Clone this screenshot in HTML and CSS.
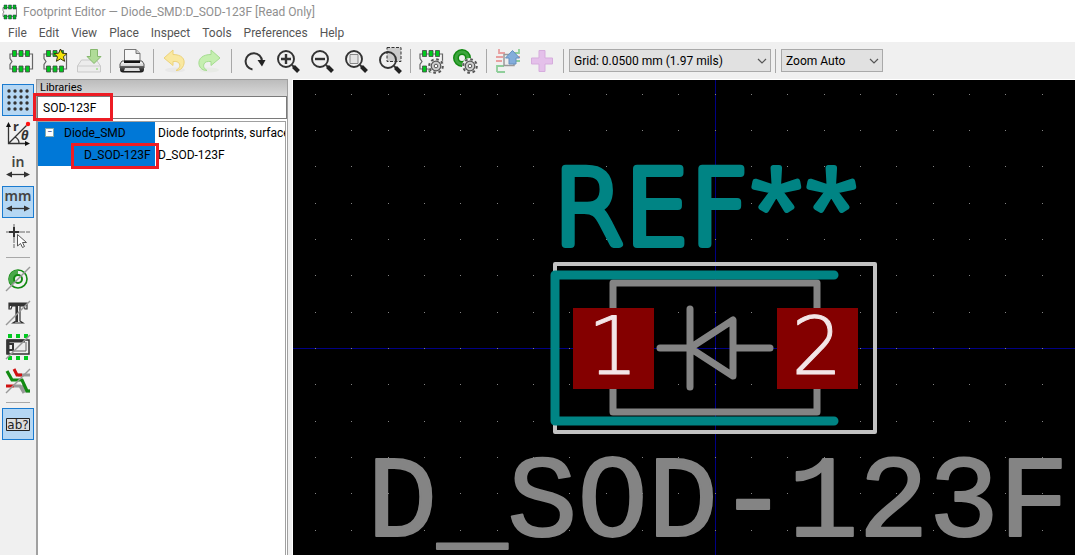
FILE: index.html
```
<!DOCTYPE html>
<html lang="en">
<head>
<meta charset="utf-8">
<title>Footprint Editor — Diode_SMD:D_SOD-123F [Read Only]</title>
<link rel="stylesheet" href="styles.css">
</head>
<body>
<svg class="defs" width="0" height="0" aria-hidden="true">
  <defs>
    <linearGradient id="tray" x1="0" y1="0" x2="0" y2="1"><stop offset="0" stop-color="#fff"/><stop offset="1" stop-color="#bbb"/></linearGradient>
    <linearGradient id="dark" x1="0" y1="0" x2="0" y2="1"><stop offset="0" stop-color="#666"/><stop offset="1" stop-color="#111"/></linearGradient>
    <pattern id="grid" x="315" y="130" width="109" height="109" patternUnits="userSpaceOnUse">
      <path fill="#848484" d="M0 0h1v1h-1zM36 0h1v1h-1zM73 0h1v1h-1zM0 36h1v1h-1zM36 36h1v1h-1zM73 36h1v1h-1zM0 73h1v1h-1zM36 73h1v1h-1zM73 73h1v1h-1z"/>
    </pattern>
    <g id="chip">
      <path d="M1 5h22.500v15h-22.500v-4.500l2-3-2-3z" fill="#f2f2f2" stroke="#666" stroke-width="1.200"/>
      <path d="M3.500 1.500h4v6h-4zM10 1.500h4v6h-4zM16.500 1.500h4v6h-4zM3.500 17h4v6h-4zM10 17h4v6h-4zM16.500 17h4v6h-4z" fill="#00c81e" stroke="#444" stroke-width=".8"/>
    </g>
    <g id="gear">
      <circle cx="17" cy="17" r="6.800" fill="none" stroke="#555" stroke-width="2" stroke-dasharray="2.670 2.670"/>
      <circle cx="17" cy="17" r="4.800" fill="#ccc" stroke="#555" stroke-width="1.200"/>
      <circle cx="17" cy="17" r="1.800" fill="#fff" stroke="#555"/>
    </g>
    <g id="lens"><circle cx="10" cy="10" r="8" fill="none" stroke="#333" stroke-width="1.900"/><path d="M16 16l2 2" stroke="#333" stroke-width="2"/><path d="M17.500 17.500l5 5" stroke="#222" stroke-width="4"/></g>
    <g id="arrows"><path d="M2 18.500h20" stroke="#333" stroke-width="1.300"/><path d="M0 18.500l6-3v6zM24 18.500l-6-3v6z" fill="#333"/></g>
  </defs>
</svg>
<div class="app">
  <header class="titlebar">
    <svg class="logo" viewBox="0 0 16 16"><path d="M1 3.500h13.500v9h-13.500v-3l1-1.500-1-1.500z" fill="#f4f4f4" stroke="#555" stroke-width=".7"/><path d="M2 1h3v4h-3zM6.500 1h3v4h-3zM11 1h3v4h-3zM2 11h3v4h-3zM6.500 11h3v4h-3zM11 11h3v4h-3z" fill="#00b81e" stroke="#234" stroke-width=".5"/></svg>
    <span>Footprint Editor — Diode_SMD:D_SOD-123F [Read Only]</span>
  </header>
  <nav class="menubar">
    <button>File</button><button>Edit</button><button>View</button><button>Place</button><button>Inspect</button><button>Tools</button><button>Preferences</button><button>Help</button>
  </nav>
  <div class="toolbar">
    <button aria-label="Open footprint"><svg viewBox="0 0 24 24"><use href="#chip"/></svg></button>
    <button aria-label="New footprint"><svg viewBox="0 0 24 24"><use href="#chip"/><path d="M17.500 0l1.900 4.200 4.600.4-3.500 3.100 1.100 4.600-4.100-2.400-4.100 2.400 1.100-4.600-3.500-3.100 4.600-.4z" fill="#f4e208" stroke="#3b3510"/></svg></button>
    <button aria-label="Save" disabled><svg viewBox="0 0 24 24"><path d="M4.500 11h15l4 6v6h-23v-6z" fill="#ececec" stroke="#c9c9c9"/><path d="M.5 17h23" stroke="#ccc"/><circle cx="20" cy="20" r="1" fill="#9fe08a"/><path d="M13.500.5h7v7h3.500l-7 7-7-7h3.500z" fill="#b0dc98" stroke="#86b86e"/></svg></button>
    <i class="sep"></i>
    <button aria-label="Print"><svg viewBox="0 0 24 24"><path d="M4.500 13v-12.500h11.500l4 4v8.500z" fill="#f8f8f8" stroke="#777"/><path d="M16 .5v4h4" fill="#ccc" stroke="#777"/><path d="M2 12h20l2 3v4h-24v-4z" fill="url(#tray)" stroke="#555"/><path d="M4 11.500h16v2.500h-16z" fill="#111"/><path d="M0 17h24v3.500q0 3-3 3h-18q-3 0-3-3z" fill="url(#dark)"/><path d="M5 19h14l1 3h-16z" fill="#ddd"/></svg></button>
    <i class="sep"></i>
    <button aria-label="Undo" disabled><svg viewBox="0 0 24 24"><ellipse cx="12" cy="21" rx="10" ry="2.500" fill="#e8e8e8"/><path d="M1 9l9-8v4.500c8 0 13 4 10.500 11-1.500 3.500-4 5-7.500 5 3-2 4.500-4 3.500-6.500-1-2.500-3.500-2.700-6.500-2.500v4z" fill="#f9e8a0" stroke="#ecd27a"/></svg></button>
    <button aria-label="Redo" disabled><svg viewBox="0 0 24 24"><ellipse cx="12" cy="21" rx="10" ry="2.500" fill="#e8ebe6"/><path d="M23 9l-9-8v4.500c-8 0-13 4-12 10 1 4 4 6 8 6-3-2-4-4-3-6.500 1-2.500 3.500-2.700 7-2.500v4z" fill="#c5efb0" stroke="#a5dc90"/></svg></button>
    <i class="sep sep-wide"></i>
    <button aria-label="Refresh"><svg viewBox="0 0 24 24"><path d="M10.500 20.500a8.200 8.200 0 1 1 9.500-8.500" fill="none" stroke="#333" stroke-width="2"/><path d="M15.500 11h8l-3.500 6.500z" fill="#222"/></svg></button>
    <button aria-label="Zoom in"><svg viewBox="0 0 24 24"><use href="#lens"/><path d="M5 10h10M10 5v10" stroke="#333" stroke-width="2.400"/></svg></button>
    <button aria-label="Zoom out"><svg viewBox="0 0 24 24"><use href="#lens"/><path d="M5 10h10" stroke="#333" stroke-width="2.400"/></svg></button>
    <button aria-label="Zoom to fit"><svg viewBox="0 0 24 24"><use href="#lens"/><path d="M6 5.500h8v9h-8z" fill="#e4e4e4" stroke="#888"/></svg></button>
    <button aria-label="Zoom to selection"><svg viewBox="0 0 24 24"><path d="M9 -1.500h14v14h-14z" fill="#ccc" stroke="#333" stroke-dasharray="3 1.500"/><use href="#lens" y="1"/></svg></button>
    <i class="sep sep-tight"></i>
    <button aria-label="Footprint properties"><svg viewBox="0 0 24 24"><use href="#chip"/><circle cx="17" cy="17" r="8" fill="#efefef"/><use href="#gear"/></svg></button>
    <button aria-label="Pad settings"><svg viewBox="0 0 24 24"><circle cx="9" cy="9" r="6" fill="none" stroke="#128a12" stroke-width="6"/><circle cx="9" cy="9" r="6" fill="none" stroke="#3ca53c" stroke-width="3"/><circle cx="17" cy="17" r="8" fill="#efefef"/><use href="#gear"/></svg></button>
    <i class="sep"></i>
    <button aria-label="Insert in board" disabled><svg viewBox="0 0 24 24"><path d="M3 0v4h6M0 8h7M0 12h6M24 8h-5" fill="none" stroke="#e8a0a0" stroke-width="1.800"/><path d="M1 23v-6h7M1 23h8M18 4h5v-4M24 12h-5" fill="none" stroke="#8fce9a" stroke-width="1.800"/><path d="M8 5.500h10v11h-10z" fill="#eee" stroke="#999" stroke-width="1.500"/><path d="M16.500 1.500l7 7.500h-3.500v6h-7v-6h-3.500z" fill="#83addb" stroke="#6690c0"/></svg></button>
    <button aria-label="Add footprint" disabled><svg viewBox="0 0 24 24"><path d="M9 1.500h6v7.500h7.500v6h-7.500v7.500h-6v-7.500h-7.500v-6h7.500z" fill="#e4c0ea" stroke="#d6addd"/></svg></button>
    <i class="sep"></i>
    <div class="combo combo-grid"><select aria-label="Grid"><option>Grid: 0.0500 mm (1.97 mils)</option></select><svg viewBox="0 0 10 6"><path d="M1 1l4 4 4-4" fill="none" stroke="#555" stroke-width="1.200"/></svg></div>
    <i class="sep"></i>
    <div class="combo combo-zoom"><select aria-label="Zoom"><option>Zoom Auto</option></select><svg viewBox="0 0 10 6"><path d="M1 1l4 4 4-4" fill="none" stroke="#555" stroke-width="1.200"/></svg></div>
  </div>
  <main class="work">
    <div class="tools">
      <button class="on" aria-label="Show grid"><svg viewBox="0 0 24 24"><path d="M3 3h18.100M3 9h18.100M3 15h18.100M3 21h18.100" stroke="#333" stroke-width="3.400" stroke-linecap="round" stroke-dasharray="0.010 6"/></svg></button>
      <button aria-label="Polar coordinates"><svg viewBox="0 0 24 24"><path d="M2.500 3v18.500h18.500M2.500 21.500l18-18M9 15q4 2 4 6" fill="none" stroke="#333" stroke-width="1.300"/><path d="M2.500 0l2.500 5h-5zM24 21.500l-5-2.500v5z" fill="#111"/><circle cx="22" cy="2" r="2.200" fill="#f11"/><text x="7" y="9" class="glyph">r</text><text x="15" y="18" class="glyph glyph-it">θ</text></svg></button>
      <button aria-label="Units in inches"><svg viewBox="0 0 24 24"><text x="12" y="11" text-anchor="middle" class="unit">in</text><use href="#arrows"/></svg></button>
      <button class="on" aria-label="Units in millimeters"><svg viewBox="0 0 24 24"><text x="12" y="11" text-anchor="middle" class="unit">mm</text><use href="#arrows"/></svg></button>
      <button aria-label="Cursor shape"><svg viewBox="0 0 24 24"><path d="M0 8h24M8 0v24" stroke="#aaa" stroke-width="2" stroke-dasharray="4 1 14 1 4"/><path d="M3 8h10M8 3v10" stroke="#333" stroke-width="2"/><path d="M11.500 10.500v11.500l3-2.500 2 4 2-1-2-4h4z" fill="#fff" stroke="#555"/></svg></button>
      <i class="rule"></i>
      <button aria-label="Pad outlines"><svg viewBox="0 0 24 24"><circle cx="12" cy="12" r="9" fill="#f2f2f2" stroke="#128a12" stroke-width="1.600"/><path d="M12 12v-9a9 9 0 0 0-6.400 15.400z" fill="#4aa84a"/><circle cx="12" cy="12" r="4" fill="#f2f2f2" stroke="#128a12" stroke-width="2"/><path d="M0 24l24-24" stroke="#999" stroke-width="1.400"/></svg></button>
      <button aria-label="Text outlines"><svg viewBox="0 0 24 24"><path d="M3 2h18v6h-2l-1-3h-4v15l3 2h-10l3-2v-15h-4l-1 3h-2z" fill="#eee" stroke="#333" stroke-width="1.200"/><path d="M3 2h18v3h-17l-1 3zM10 5h2v16h-2z" fill="#333"/><path d="M0 24l24-24" stroke="#999" stroke-width="1.400"/></svg></button>
      <button aria-label="Graphic outlines"><svg viewBox="0 0 24 24"><path d="M2-1h4v4h-4zM10-1h4v4h-4zM18-1h4v4h-4zM2 21h4v4h-4zM10 21h4v4h-4zM18 21h4v4h-4z" fill="#00c81e"/><path d="M1 5h22v14h-22z" fill="#eee" stroke="#333" stroke-width="1.500"/><path d="M1 6h18M2 5v14" stroke="#333" stroke-width="3"/><path d="M2 9h5v6h-5" fill="none" stroke="#333" stroke-width="2"/><path d="M20 7v9h-14" fill="none" stroke="#666"/><path d="M0 24l24-24" stroke="#999" stroke-width="1.400"/></svg></button>
      <button aria-label="High contrast"><svg viewBox="0 0 24 24"><path d="M12 6h12M16 16l4 6h4" fill="none" stroke="#999" stroke-width="3"/><path d="M8 0l3 6h5M0 17h8" fill="none" stroke="#d01010" stroke-width="3"/><path d="M1 2l5 9h10l5 11h3" fill="none" stroke="#128a12" stroke-width="3.200"/><path d="M8 17h6l4 7" fill="none" stroke="#999" stroke-width="3"/><path d="M0 24l24-24" stroke="#999" stroke-width="1.400"/></svg></button>
      <i class="rule"></i>
      <button class="on" aria-label="Show library tree"><svg viewBox="0 0 24 24"><path d="M.5 6.500h23v12h-23z" fill="#ddd" stroke="#222"/><text x="12" y="17" text-anchor="middle" class="label">ab?</text></svg></button>
    </div>
    <aside class="panel">
      <h2>Libraries</h2>
      <div class="search"><input type="text" aria-label="Filter libraries" value="SOD-123F"><span class="mark mark-search"></span></div>
      <div class="tree">
        <table>
          <tr><td class="name"><button class="fold" aria-label="Collapse">−</button><span>Diode_SMD</span></td><td>Diode footprints, surface</td></tr>
          <tr><td class="name child"><span>D_SOD-123F</span><span class="mark mark-row"></span></td><td>D_SOD-123F</td></tr>
        </table>
      </div>
    </aside>
    <section class="canvas">
      <svg viewBox="293 80 782 475" preserveAspectRatio="xMidYMid slice">
        <path d="M293 348h782v1h-782zM715 80h1v475h-1z" fill="#000084"/>
        <rect x="293" y="80" width="782" height="475" fill="url(#grid)"/>
        <g fill="none" stroke-linecap="round" stroke-linejoin="round">
          <path d="M555 264h320v168h-320z" stroke="#c2c2c2" stroke-width="4"/>
          <path d="M613 283h204v129h-204zM660 348h30M690 309v78M733 320v56l-43-28zM733 348h37" stroke="#848484" stroke-width="7"/>
          <path d="M834 275h-279v146h279" stroke="#008484" stroke-width="9"/>
        </g>
        <path d="M573 308h81v81h-81zM777 308h81v81h-81z" fill="#840000"/>
        <text class="silk" x="553" y="244">REF<tspan class="star">**</tspan></text>
        <text class="fab" x="718" y="536" text-anchor="middle">D_SOD-123F</text>
        <text class="pad" x="613" y="374" text-anchor="middle">1</text>
        <text class="pad" x="817" y="374" text-anchor="middle">2</text>
      </svg>
    </section>
  </main>
</div>
</body>
</html>
```
FILE: styles.css
```
* { box-sizing: border-box; }
body { margin: 0; background: #f0f0f0; font: 12px/16px Roboto, "Open Sans", sans-serif; color: #000; }
button, input, select { font: inherit; color: inherit; }
button { border: 0; padding: 0; background: none; }
.defs { position: absolute; }
.app { display: flex; flex-direction: column; height: 100vh; overflow: hidden; }

.titlebar { display: flex; align-items: center; gap: 5px; height: 23px; padding-left: 2px; background: #fff; color: #8f8f8f; }
.logo { width: 16px; height: 16px; }
.menubar { display: flex; gap: 12px; height: 19px; padding-left: 8px; background: #fff; color: #555; }
.menubar button { line-height: 18px; }

.toolbar { display: flex; align-items: center; height: 37px; padding-left: 4px; background: #f0f0f0; flex: none; }
.toolbar button { display: grid; place-items: center; width: 34px; height: 34px; flex: none; }
.toolbar svg, .tools svg { width: 24px; height: 24px; overflow: visible; }
.sep { width: 1px; height: 24px; margin: 0 4px; background: #a8a8a8; flex: none; }
.sep-wide { margin: 0 5px; }
.sep-tight { margin: 0 3px; }
.combo { position: relative; height: 23px; }
.combo-grid { width: 202px; margin-left: 1px; }
.combo-zoom { width: 102px; margin-left: 1px; }
.combo select { appearance: none; width: 100%; height: 100%; padding: 0 20px 0 4px; border: 1px solid #a9a9a9; border-radius: 0; background: #e1e1e1; }
.toolbar .combo svg { position: absolute; right: 4px; top: 9px; width: 10px; height: 6px; }

.work { display: flex; flex: 1; min-height: 0; }
.tools { display: flex; flex-direction: column; gap: 2px; width: 36px; padding: 5px 2px 0; flex: none; }
.tools button { display: grid; place-items: center; width: 32px; height: 32px; border: 1px solid transparent; flex: none; }
.tools .on { background: #b5d7f3; border-color: #1a7bd0; }
.rule { height: 1px; margin: 3px 4px; background: #a8a8a8; }
.unit { font: 600 14px "Noto Sans", sans-serif; fill: #444; }
.glyph { font: bold 13px "Noto Sans", sans-serif; fill: #333; }
.glyph-it { font-style: italic; }
.label { font: 12px "DejaVu Sans", sans-serif; fill: #222; }

.panel { display: flex; flex-direction: column; width: 252px; border: 1px solid #a0a0a0; border-bottom: 0; flex: none; background: #fff; }
.panel h2 { margin: 0; padding-left: 3px; font-size: 11px; font-weight: 400; line-height: 16px; background: linear-gradient(#bcbcbc, #d9d9d9); }
.search { position: relative; }
.search input { display: block; width: 100%; height: 23px; padding: 0 5px; border: 1px solid #7a7a7a; border-radius: 0; outline: 0; background: #fff; }
.tree { flex: 1; margin: 2px 1px 0 0; border: 1px solid #a0a0a0; border-bottom: 0; }
.tree table { width: 100%; table-layout: fixed; border-spacing: 0; }
.tree td { position: relative; height: 22px; padding: 0 0 0 3px; white-space: nowrap; overflow: hidden; }
.tree .name { width: 117px; padding: 0 0 0 26px; background: #0078d7; overflow: visible; }
.tree .child { padding-left: 46px; }
.fold { position: absolute; left: 7px; top: 6px; width: 9px; height: 9px; border: 1px solid #8aa; background: #fff; color: #238; font-size: 9px; line-height: 7px; }
.mark { position: absolute; z-index: 1; border: 3px solid #ed1c24; pointer-events: none; }
.mark-search { left: -4px; top: -3px; width: 80px; height: 28px; }
.mark-row { left: 33px; top: -1px; width: 88px; height: 26px; }

.canvas { flex: 1; min-width: 0; margin: 0 0 0 4px; border-left: 1px solid #fff; border-top: 1px solid #fff; background: #000; }
.canvas svg { display: block; width: 100%; height: 100%; }
.silk, .fab, .pad { stroke-linejoin: round; stroke-linecap: round; }
.silk { font-family: "DejaVu Sans", sans-serif; font-weight: 200; font-size: 103px; fill: #008484; stroke: #008484; stroke-width: 8px; }
.star { font-family: "Open Sans", sans-serif; font-size: 100px; stroke-width: 6px; }
.fab { font-family: "Liberation Mono", monospace; font-size: 117px; fill: #848484; stroke: #848484; stroke-width: 2px; }
.pad { font-family: "DejaVu Sans", sans-serif; font-weight: 200; font-size: 80px; fill: #f3e6e8; stroke: #f3e6e8; stroke-width: 1px; }
```
